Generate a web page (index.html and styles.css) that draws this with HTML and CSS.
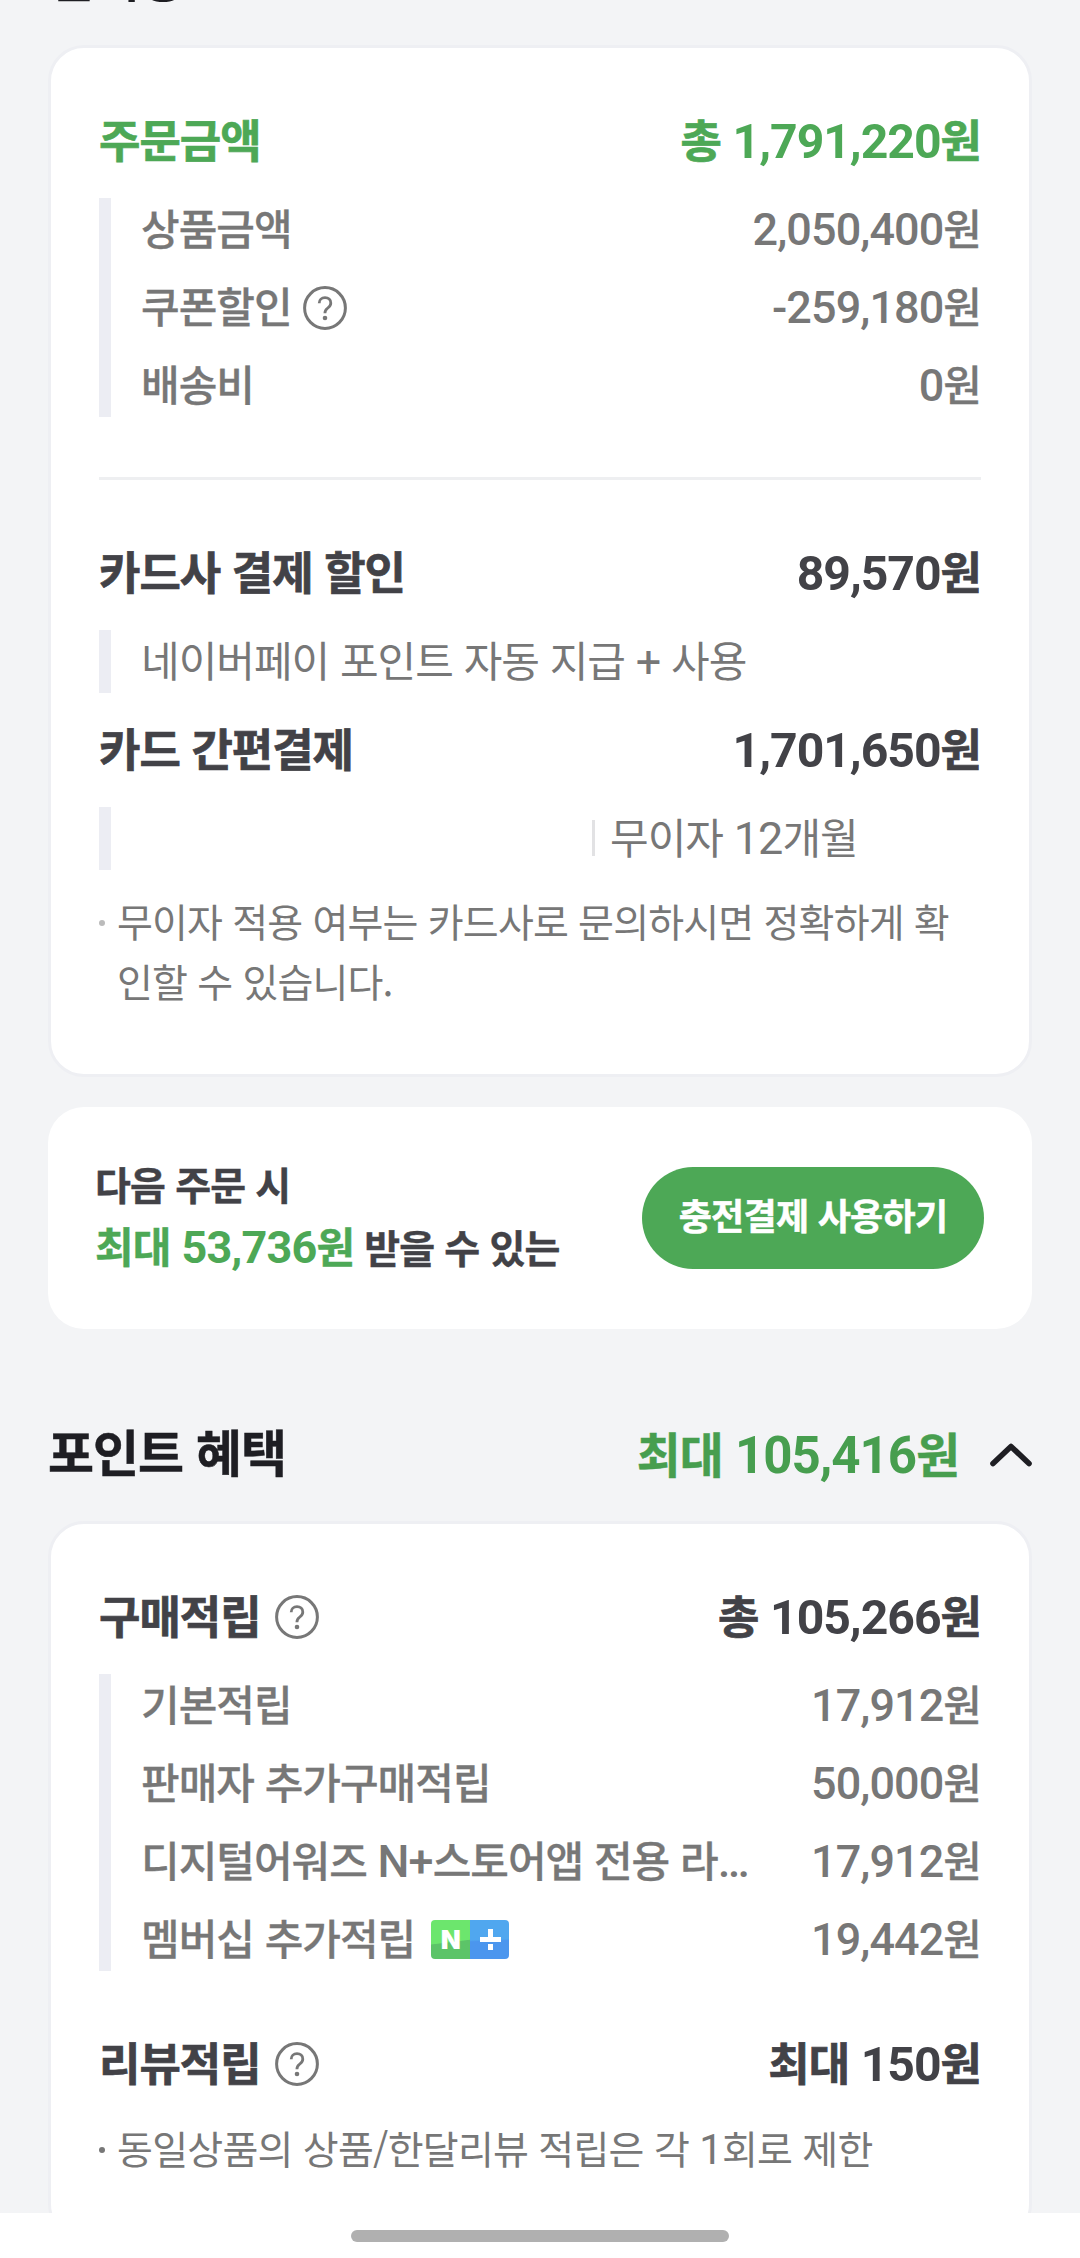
FILE: index.html
```html
<!DOCTYPE html>
<html lang="ko">
<head>
<meta charset="utf-8">
<meta name="viewport" content="width=device-width, initial-scale=1">
<title>결제정보</title>
<link rel="stylesheet" href="styles.css">
</head>
<body>
<svg class="defs" aria-hidden="true">
  <symbol id="help" viewBox="0 0 44 44">
    <circle cx="22" cy="22" r="20.4" fill="none" stroke="#777" stroke-width="3"/>
    <path d="M16.2 17.2c0-3.4 2.4-5.5 5.8-5.5s5.8 2.1 5.8 5.2c0 2.4-1.2 3.7-3 5.1-2 1.5-2.9 2.6-2.9 5.2" fill="none" stroke="#777" stroke-width="2.8"/>
    <circle cx="22" cy="32" r="2.3" fill="#777"/>
  </symbol>
</svg>
<div class="screen">
  <main class="page">
    <h2 class="cut-title">결제정보</h2>

    <section class="card">
      <div class="head accent"><span>주문금액</span><span>총 <b class="n">1,791,220</b>원</span></div>
      <div class="detail">
        <div class="row"><span>상품금액</span><span><b class="n">2,050,400</b>원</span></div>
        <div class="row"><span class="label">쿠폰할인<svg class="help"><use href="#help"/></svg></span><span><b class="n">-259,180</b>원</span></div>
        <div class="row"><span>배송비</span><span><b class="n">0</b>원</span></div>
      </div>
      <hr class="rule">
      <div class="head"><span>카드사 결제 할인</span><span><b class="n">89,570</b>원</span></div>
      <div class="detail light">
        <div class="row"><span>네이버페이 포인트 자동 지급 <b class="n">+</b> 사용</span></div>
      </div>
      <div class="head next"><span>카드 간편결제</span><span><b class="n">1,701,650</b>원</span></div>
      <div class="detail light">
        <div class="row"><span class="installment"><span>무이자 <b class="n">12</b>개월</span></span></div>
      </div>
      <p class="note pale">무이자 적용 여부는 카드사로 문의하시면 정확하게 확<br>인할 수 있습니다.</p>
    </section>

    <section class="promo">
      <p class="promo-text"><span>다음 주문 시</span><br><strong>최대 <b class="n">53,736</b>원</strong> 받을 수 있는</p>
      <a class="button">충전결제 사용하기</a>
    </section>

    <header class="section-head">
      <h2>포인트 혜택</h2>
      <span class="section-total">최대 <b class="n">105,416</b>원</span>
      <svg class="chevron" viewBox="0 0 42 24"><path d="M3 20.5 21 3.5l18 17" fill="none" stroke="#1e1e23" stroke-width="5.6" stroke-linecap="round" stroke-linejoin="round"/></svg>
    </header>

    <section class="card">
      <div class="head"><span class="label">구매적립<svg class="help"><use href="#help"/></svg></span><span>총 <b class="n">105,266</b>원</span></div>
      <div class="detail">
        <div class="row"><span>기본적립</span><span><b class="n">17,912</b>원</span></div>
        <div class="row"><span>판매자 추가구매적립</span><span><b class="n">50,000</b>원</span></div>
        <div class="row"><span>디지털어워즈 <b class="n">N+</b>스토어앱 전용 라<b class="n">…</b></span><span><b class="n">17,912</b>원</span></div>
        <div class="row"><span class="label">멤버십 추가적립<span class="badge"><span class="badge-n">N</span><svg class="badge-plus" viewBox="0 0 39 39"><path d="M10 17h21v5H10zM18 9h5v8h-5zM18 24h5v6h-5z" fill="#fff"/></svg></span></span><span><b class="n">19,442</b>원</span></div>
      </div>
      <div class="head last"><span class="label">리뷰적립<svg class="help"><use href="#help"/></svg></span><span>최대 <b class="n">150</b>원</span></div>
      <p class="note">동일상품의 상품/한달리뷰 적립은 각 <b class="n">1</b>회로 제한</p>
    </section>
  </main>
  <footer class="nav"><span class="handle"></span></footer>
</div>
</body>
</html>
```
FILE: styles.css
```css
* { box-sizing: border-box; }

body {
  margin: 0;
  background: #f3f4f6;
  color: #424247;
  font-family: "Noto Sans CJK KR", sans-serif;
  letter-spacing: -1px;
}

h2, p { margin: 0; }
.defs { position: absolute; width: 0; height: 0; }

/* Latin digits are set in Roboto, slightly larger than the Hangul around them */
.n {
  font-family: Roboto, sans-serif;
  font-size: 1.07em;
  font-weight: inherit;
  line-height: 0;
  -webkit-text-stroke: 0;
}

.screen {
  display: flex;
  flex-direction: column;
  width: 1080px;
  height: 2258px;
  overflow: hidden;
}

.page {
  flex: 1;
  min-height: 0;
  padding: 0 48px;
  overflow: hidden;
}

.cut-title {
  height: 66px;
  margin: -58px 0 37px;
  color: #1e1e23;
  font-size: 50px;
  line-height: 66px;
}

.card {
  padding: 60px 48px;
  border: 3px solid #eeeff3;
  border-radius: 36px;
  background: #fff;
}

.head {
  display: flex;
  justify-content: space-between;
  height: 66px;
  margin-bottom: 24px;
  padding-bottom: 5px;
  font-size: 45px;
  font-weight: 700;
  line-height: 61px;
  white-space: nowrap;
  -webkit-text-stroke: 0.7px currentColor;
}
.head.accent { color: #4da856; }
.head.next { margin-top: 24px; }
.head.last { margin: 60px 0 20px; }

.detail {
  display: flex;
  flex-direction: column;
  gap: 15px;
  padding-left: 30px;
  border-left: 12px solid #ecedf3;
  color: #777;
  font-size: 42px;
  font-weight: 500;
  -webkit-text-stroke: 0.3px currentColor;
}
.detail.light { font-weight: 400; -webkit-text-stroke: 0; }

.row {
  display: flex;
  justify-content: space-between;
  height: 63px;
  padding-bottom: 5px;
  line-height: 58px;
  white-space: nowrap;
}
.row .n { letter-spacing: -0.9px; }

.label { display: flex; align-items: center; }
.help { width: 44px; height: 44px; margin: 5px 0 0 11px; }
.head .help { margin-left: 14px; }

.rule {
  height: 3px;
  margin: 60px 0;
  border: 0;
  background: #eeeff1;
}

.installment {
  display: flex;
  align-items: center;
  margin-left: 451px;
}
.installment::before {
  content: "";
  width: 3px;
  height: 36px;
  margin: 3px 15px 0 0;
  background: #e2e2e4;
}

.note {
  display: flow-root;
  height: 60px;
  padding-left: 18px;
  color: #777;
  font-size: 39px;
  letter-spacing: -0.75px;
  line-height: 60px;
  white-space: nowrap;
}
.note::before {
  content: "";
  float: left;
  width: 6px;
  height: 6px;
  margin: 30px 0 0 -18px;
  border-radius: 3px;
  background: #777;
}
.note.pale { height: 120px; margin: 20px 0 4px; letter-spacing: -0.82px; }
.note.pale::before { background: #bbb; }

.promo {
  display: flex;
  align-items: center;
  justify-content: space-between;
  height: 222px;
  margin-top: 30px;
  padding: 0 48px;
  border-radius: 36px;
  background: #fff;
}
.promo-text {
  margin: -6px 0 0 -1px;
  font-size: 39px;
  font-weight: 700;
  letter-spacing: -0.85px;
  line-height: 63px;
  white-space: nowrap;
  -webkit-text-stroke: 0.4px currentColor;
}
.promo-text strong {
  color: #4da856;
  font-size: 42px;
  font-weight: 700;
  line-height: 0;
}
.button {
  width: 342px;
  height: 102px;
  border-radius: 51px;
  background: #4da856;
  color: #fff;
  font-size: 36px;
  font-weight: 700;
  letter-spacing: -0.7px;
  line-height: 94px;
  text-align: center;
  -webkit-text-stroke: 0.5px currentColor;
}

.section-head {
  display: flex;
  align-items: center;
  height: 72px;
  margin: 90px 0 30px;
  font-weight: 700;
  line-height: 66px;
  -webkit-text-stroke: 0.5px currentColor;
}
.section-head h2 { flex: 1; margin-top: -10px; color: #1e1e23; font-size: 50px; letter-spacing: -1px; }
.section-total { margin-top: -5px; color: #479e4f; font-size: 47.7px; }
.chevron { width: 42px; height: 24px; margin-left: 31px; }

.badge {
  display: flex;
  width: 78px;
  height: 39px;
  margin: 5px 0 0 16px;
  border-radius: 4px;
  overflow: hidden;
  -webkit-text-stroke: 0;
}
.badge-n {
  width: 39px;
  background: linear-gradient(173deg, #5cc468 43%, #5cc468 43%);
  background: linear-gradient(173deg, #6ce66d 55%, #5cc468 57%);
  color: #fff;
  font: 900 26px/39px Inter, sans-serif;
  letter-spacing: 0;
  text-align: center;
}
.badge-plus {
  width: 39px;
  height: 39px;
  background: linear-gradient(178deg, #50a7ef 50%, #4b96ee 54%);
}

.nav {
  display: flex;
  justify-content: center;
  flex: none;
  height: 45px;
  padding-top: 17px;
  background: #fff;
}
.handle { width: 378px; height: 12px; border-radius: 6px; background: #b0b0b0; }
```
